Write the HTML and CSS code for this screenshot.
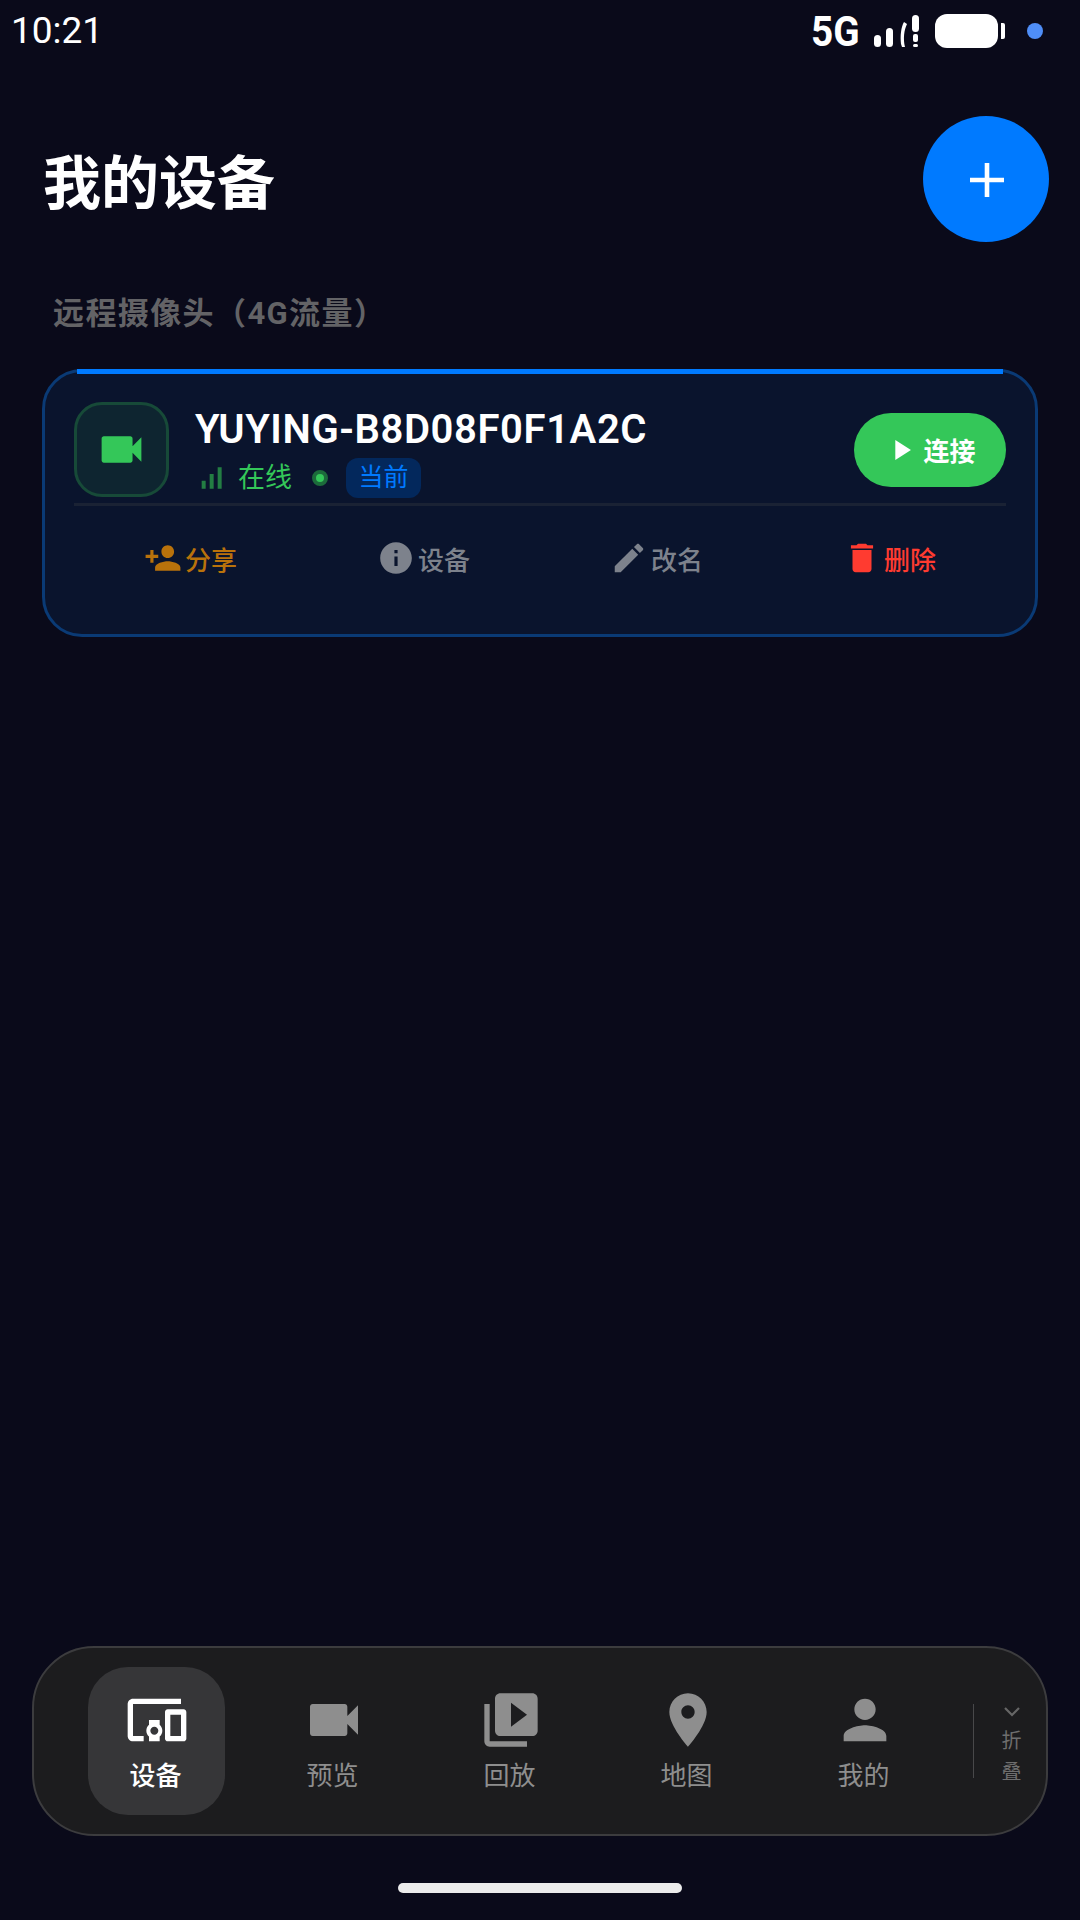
FILE: index.html
```html
<!DOCTYPE html>
<html>
  <head>
    <meta charset="utf-8" />
    <title>我的设备</title>
    <link rel="stylesheet" href="styles.css">
  </head>
  <body>
    <div class="screen">
      <div class="status-bar">
        <span class="time">10:21</span>
        <div class="status-icons">
          <span class="net">5G</span>
          <svg class="bars" width="46" height="34" viewBox="0 0 46 34">
            <rect x="0" y="20" width="7" height="12" rx="3.5" fill="#fff"/>
            <rect x="12" y="13" width="7" height="19" rx="3.5" fill="#fff"/>
            <path d="M30 7c-3 5-4 14-3 22l1 3h3c-2-8-1-17 2-23z" fill="#fff"/>
            <rect x="38" y="0" width="7" height="17" rx="3.5" fill="#fff"/>
            <rect x="39" y="19" width="5" height="8" rx="2" fill="#fff"/>
            <rect x="39" y="29" width="5" height="3" rx="1.5" fill="#fff"/>
          </svg>
          <div class="battery"></div>
          <div class="battery-nub"></div>
          <div class="notify-dot"></div>
        </div>
      </div>

      <div class="header">
        <h1 class="page-title">我的设备</h1>
        <div class="add-btn">
          <svg width="34" height="34" viewBox="0 0 34 34"><path d="M14.7 0h4.6v14.7H34v4.6H19.3V34h-4.6V19.3H0v-4.6h14.7z" fill="#fff"/></svg>
        </div>
      </div>

      <div class="section-label">远程摄像头（4G流量）</div>

      <div class="device-card">
        <div class="device-main">
          <div class="device-icon">
            <svg width="53" height="53" viewBox="0 0 24 24"><path d="M17 10.5V7c0-.55-.45-1-1-1H4c-.55 0-1 .45-1 1v10c0 .55.45 1 1 1h12c.55 0 1-.45 1-1v-3.5l4 4v-11l-4 4z"/></svg>
          </div>
          <div class="device-info">
            <div class="device-name">YUYING-B8D08F0F1A2C</div>
            <div class="device-status">
              <svg class="signal" width="32" height="32" viewBox="0 0 24 24"><path d="M17 4h3v16h-3V4zM5 14h3v6H5v-6zm6-5h3v11h-3V9z"/></svg>
              <span class="online">在线</span>
              <span class="online-dot"></span>
              <span class="current-tag">当前</span>
            </div>
          </div>
          <div class="connect-btn">
            <svg width="34" height="34" viewBox="0 0 24 24"><path d="M8 5v14l11-7z" fill="#fff"/></svg>
            <span>连接</span>
          </div>
        </div>
        <div class="device-actions">
          <div class="action share">
            <svg width="38" height="38" viewBox="0 0 24 24"><path d="M15 12c2.21 0 4-1.79 4-4s-1.79-4-4-4-4 1.79-4 4 1.79 4 4 4zm-9-2V7H4v3H1v2h3v3h2v-3h3v-2H6zm9 4c-2.67 0-8 1.34-8 4v2h16v-2c0-2.66-5.33-4-8-4z"/></svg>
            <span>分享</span>
          </div>
          <div class="action">
            <svg width="38" height="38" viewBox="0 0 24 24"><path d="M12 2C6.48 2 2 6.48 2 12s4.48 10 10 10 10-4.48 10-10S17.52 2 12 2zm1 15h-2v-6h2v6zm0-8h-2V7h2v2z"/></svg>
            <span>设备</span>
          </div>
          <div class="action">
            <svg width="38" height="38" viewBox="0 0 24 24"><path d="M3 17.25V21h3.75L17.81 9.94l-3.75-3.75L3 17.25zM20.71 7.04c.39-.39.39-1.02 0-1.41l-2.34-2.34c-.39-.39-1.02-.39-1.41 0l-1.83 1.83 3.75 3.75 1.83-1.83z"/></svg>
            <span>改名</span>
          </div>
          <div class="action danger">
            <svg width="38" height="38" viewBox="0 0 24 24"><path d="M6 19c0 1.1.9 2 2 2h8c1.1 0 2-.9 2-2V7H6v12zM19 4h-3.5l-1-1h-5l-1 1H5v2h14V4z"/></svg>
            <span>删除</span>
          </div>
        </div>
      </div>

      <div class="bottom-nav">
        <div class="nav-item active">
          <svg width="64" height="64" viewBox="0 0 24 24"><path d="M3 6h18V4H3c-1.1 0-2 .9-2 2v12c0 1.1.9 2 2 2h4v-2H3V6zm10 6H9v1.78c-.61.55-1 1.33-1 2.22s.39 1.67 1 2.22V20h4v-1.78c.61-.55 1-1.34 1-2.22s-.39-1.67-1-2.22V12zm-2 5.5c-.83 0-1.5-.67-1.5-1.5s.67-1.5 1.5-1.5 1.5.67 1.5 1.5-.67 1.5-1.5 1.5zM22 8h-6c-.5 0-1 .5-1 1v10c0 .5.5 1 1 1h6c.5 0 1-.5 1-1V9c0-.5-.5-1-1-1zm-1 10h-4v-8h4v8z"/></svg>
          <span>设备</span>
        </div>
        <div class="nav-item">
          <svg width="64" height="64" viewBox="0 0 24 24"><path d="M17 10.5V7c0-.55-.45-1-1-1H4c-.55 0-1 .45-1 1v10c0 .55.45 1 1 1h12c.55 0 1-.45 1-1v-3.5l4 4v-11l-4 4z"/></svg>
          <span>预览</span>
        </div>
        <div class="nav-item">
          <svg width="64" height="64" viewBox="0 0 24 24"><path d="M4 6H2v14c0 1.1.9 2 2 2h14v-2H4V6zm16-4H8c-1.1 0-2 .9-2 2v12c0 1.1.9 2 2 2h12c1.1 0 2-.9 2-2V4c0-1.1-.9-2-2-2zm-8 12.5v-9l6 4.5-6 4.5z"/></svg>
          <span>回放</span>
        </div>
        <div class="nav-item">
          <svg width="64" height="64" viewBox="0 0 24 24"><path d="M12 2C8.13 2 5 5.13 5 9c0 5.25 7 13 7 13s7-7.75 7-13c0-3.87-3.13-7-7-7zm0 9.5c-1.38 0-2.5-1.12-2.5-2.5s1.12-2.5 2.5-2.5 2.5 1.12 2.5 2.5-1.12 2.5-2.5 2.5z"/></svg>
          <span>地图</span>
        </div>
        <div class="nav-item">
          <svg width="64" height="64" viewBox="0 0 24 24"><path d="M12 12c2.21 0 4-1.79 4-4s-1.79-4-4-4-4 1.79-4 4 1.79 4 4 4zm0 2c-2.67 0-8 1.34-8 4v2h16v-2c0-2.66-5.33-4-8-4z"/></svg>
          <span>我的</span>
        </div>
        <div class="nav-collapse">
          <svg width="20" height="12" viewBox="0 0 20 12"><path d="M3 2l7 7 7-7" fill="none" stroke="#666" stroke-width="2.2"/></svg>
          <span>折</span>
          <span>叠</span>
        </div>
      </div>

      <div class="home-bar"></div>
    </div>
  </body>
</html>
```

FILE: styles.css
```css
* {
  box-sizing: border-box;
}
body {
  margin: 0;
  background-color: #0a0a1a;
  font-family: Roboto, 'Noto Sans CJK SC', sans-serif;
  color: #fff;
}
.screen {
  display: flex;
  flex-direction: column;
  width: 1080px;
  height: 1920px;
  overflow: hidden;
}
svg {
  display: block;
  flex-shrink: 0;
}

/* status bar */
.status-bar {
  display: flex;
  justify-content: space-between;
  align-items: center;
  height: 62px;
  padding: 0 37px 0 11px;
}
.time {
  font-size: 37px;
  line-height: 60px;
}
.status-icons {
  display: flex;
  align-items: center;
}
.net {
  width: 46px;
  margin-left: -4px;
  font-size: 43px;
  font-weight: 700;
  line-height: 60px;
  white-space: nowrap;
  transform: scaleX(0.9);
  transform-origin: left center;
}
.bars {
  margin-left: 17px;
  margin-top: 1px;
}
.battery {
  width: 63px;
  height: 34px;
  margin-left: 15px;
  border-radius: 12px;
  background-color: #fff;
}
.battery-nub {
  width: 4px;
  height: 16px;
  margin-left: 3px;
  border-radius: 0 2px 2px 0;
  background-color: #fff;
}
.notify-dot {
  width: 16px;
  height: 16px;
  margin-left: 22px;
  border-radius: 50%;
  background-color: #4f8ef7;
}

/* header */
.header {
  display: flex;
  justify-content: space-between;
  align-items: center;
  margin-top: 54px;
  padding: 0 31px 0 43px;
}
.page-title {
  margin: 9px 0 0;
  font-size: 58px;
  font-weight: 700;
  line-height: 72px;
}
.add-btn {
  display: flex;
  justify-content: center;
  align-items: center;
  width: 126px;
  height: 126px;
  padding: 2px 0 0 2px;
  border-radius: 50%;
  background-color: #007aff;
}
.section-label {
  margin: 50px 0 0 53px;
  font-size: 31px;
  font-weight: 700;
  line-height: 44px;
  letter-spacing: 1.4px;
  color: #636366;
}

/* device card */
.device-card {
  position: relative;
  height: 268px;
  margin: 33px 42px 0;
  padding: 30px 29px 0;
  border: 3px solid #0a3a75;
  border-radius: 40px;
  background-color: #0a142d;
}
/* blue accent along the straight part of the top edge */
.device-card::before {
  content: '';
  position: absolute;
  top: -3px;
  left: 32px;
  right: 32px;
  height: 5px;
  background-color: #007aff;
}
.device-main {
  display: flex;
  align-items: center;
  height: 104px;
  padding-bottom: 6px;
  border-bottom: 3px solid #1a2234;
}
.device-icon {
  display: flex;
  justify-content: center;
  align-items: center;
  width: 95px;
  height: 95px;
  border: 3px solid #174a38;
  border-radius: 28px;
  background-color: #0e2530;
  fill: #34c759;
}
.device-info {
  flex: 1;
  align-self: flex-start;
  margin: 4px 0 0 26px;
}
.device-name {
  font-size: 40px;
  font-weight: 600;
  line-height: 47px;
  letter-spacing: 0.6px;
}
.device-status {
  display: flex;
  align-items: center;
  margin-top: 5px;
}
.signal {
  fill: #237d43;
}
.online {
  margin-left: 11px;
  font-size: 27px;
  line-height: 40px;
  color: #34c759;
}
.online-dot {
  width: 16px;
  height: 16px;
  margin-left: 20px;
  border: 4px solid #1c6b3b;
  border-radius: 50%;
  background-color: #34c759;
}
.current-tag {
  width: 75px;
  height: 40px;
  margin-left: 18px;
  border-radius: 12px;
  background-color: #03285c;
  font-size: 25px;
  line-height: 40px;
  text-align: center;
  color: #007aff;
}
.connect-btn {
  display: flex;
  justify-content: center;
  align-items: center;
  gap: 5px;
  width: 152px;
  height: 74px;
  border-radius: 37px;
  background-color: #34c759;
  font-size: 26px;
  font-weight: 700;
}

/* actions */
.device-actions {
  display: grid;
  grid-template-columns: repeat(4, 1fr);
  margin-top: 33px;
}
.action {
  display: flex;
  justify-content: center;
  align-items: center;
  gap: 3px;
  height: 38px;
  font-size: 26px;
  font-weight: 500;
  color: #7d828c;
  fill: #7d828c;
}
.action.share {
  color: #b9720b;
  fill: #b9720b;
}
.action.danger {
  color: #ff3b30;
  fill: #ff3b30;
}

/* bottom nav */
.bottom-nav {
  display: flex;
  flex-shrink: 0;
  align-items: center;
  gap: 40px;
  height: 190px;
  margin: auto 32px 0;
  padding: 0 0 0 54px;
  border: 2px solid #3c3c3e;
  border-radius: 62px;
  background-color: #1c1c1e;
}
.nav-item {
  display: flex;
  flex-direction: column;
  flex-shrink: 0;
  align-items: center;
  width: 137px;
  height: 148px;
  padding-top: 21px;
  border-radius: 40px;
  fill: #8e8e8e;
  color: #8e8e8e;
  font-size: 26px;
}
.nav-item span {
  margin: 6px 2px 0 0;
  line-height: 36px;
}
.nav-item.active {
  background-color: #363638;
  fill: #fff;
  color: #fff;
  font-weight: 500;
}
.nav-collapse {
  display: flex;
  flex-direction: column;
  flex-shrink: 0;
  align-items: center;
  width: 72px;
  height: 74px;
  padding-left: 4px;
  border-left: 1px solid #48484a;
  font-size: 20px;
  line-height: 31px;
  color: #6e6e6e;
}
.nav-collapse svg {
  margin: 2px 0 8px;
}

.home-bar {
  flex-shrink: 0;
  width: 284px;
  height: 10px;
  margin: 47px auto 27px;
  border-radius: 5px;
  background-color: #ececec;
}
```
